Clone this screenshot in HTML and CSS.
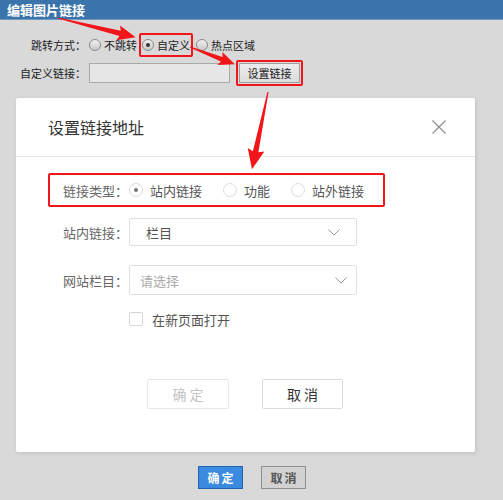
FILE: index.html
```html
<!DOCTYPE html>
<html lang="zh">
<head>
<meta charset="utf-8">
<title>编辑图片链接</title>
<link rel="stylesheet" href="styles.css">
</head>
<body>
<div class="page">
  <div class="titlebar">编辑图片链接</div>

  <div class="form">
    <div class="row row-mode">
      <span class="lbl">跳转方式：</span>
      <label class="opt"><i class="rad"></i>不跳转</label>
      <span class="mark mark-opt"><label class="opt"><i class="rad on"></i>自定义</label></span>
      <label class="opt"><i class="rad"></i>热点区域</label>
    </div>
    <div class="row row-link">
      <span class="lbl">自定义链接：</span>
      <span class="txt"></span>
      <span class="mark mark-btn"><span class="btn-set">设置链接</span></span>
    </div>
  </div>

  <div class="dialog">
    <div class="dlg-head">
      <span class="dlg-title">设置链接地址</span>
      <svg class="dlg-close" width="14" height="14" viewBox="0 0 14 14"><path d="M0.5 0.5L13.5 13.5M13.5 0.5L0.5 13.5" stroke="#8c8c8c" stroke-width="1.1" fill="none"/></svg>
    </div>
    <div class="dlg-body">
      <div class="typebox">
        <span class="flbl">链接类型：</span>
        <label class="dopt"><i class="drad on"></i>站内链接</label>
        <label class="dopt"><i class="drad"></i>功能</label>
        <label class="dopt"><i class="drad"></i>站外链接</label>
      </div>
      <div class="frow frow-1">
        <span class="flbl">站内链接：</span>
        <div class="sel sel-1"><span class="sel-val">栏目</span>
          <svg class="chev" width="12" height="7" viewBox="0 0 12 7"><path d="M0.5 0.5L6 6L11.5 0.5" stroke="#9a9a9a" stroke-width="1" fill="none"/></svg>
        </div>
      </div>
      <div class="frow frow-2">
        <span class="flbl">网站栏目：</span>
        <div class="sel sel-2"><span class="sel-ph">请选择</span>
          <svg class="chev" width="12" height="7" viewBox="0 0 12 7"><path d="M0.5 0.5L6 6L11.5 0.5" stroke="#9a9a9a" stroke-width="1" fill="none"/></svg>
        </div>
      </div>
      <div class="frow frow-3">
        <span class="flbl"></span>
        <label class="chk"><i class="box"></i>在新页面打开</label>
      </div>
      <div class="dlg-actions">
        <span class="dbtn dbtn-off">确 定</span>
        <span class="dbtn">取 消</span>
      </div>
    </div>
  </div>

  <div class="actions">
    <span class="abtn abtn-ok">确定</span>
    <span class="abtn abtn-cancel">取消</span>
  </div>

  <svg class="arrows" width="503" height="500" viewBox="0 0 503 500">
    <g fill="#f2151a">
      <polygon transform="translate(58,18) rotate(13.9)" points="0,-0.6 64,-2.6 62,-7.5 80,0 62,7.5 64,2.6 0,0.6"/>
      <polygon transform="translate(190,47) rotate(21.1)" points="0,-0.6 34,-2.4 32,-7 48,0 32,7 34,2.4 0,0.6"/>
      <polygon transform="translate(268,92) rotate(101.7)" points="0,-0.6 61,-2.8 59,-8.5 79,0 59,8.5 61,2.8 0,0.6"/>
    </g>
  </svg>
</div>
</body>
</html>
```

FILE: styles.css
```css
html, body {
  margin: 0;
  padding: 0;
  background: #d9d9d9;
}
body {
  font-family: "Noto Sans CJK SC", "Noto Sans", sans-serif;
  color: #333;
}
.page {
  position: relative;
  width: 503px;
  height: 500px;
  overflow: hidden;
  white-space: nowrap;
}
.titlebar {
  height: 20px;
  line-height: 20px;
  background: #3b74ab;
  border-bottom: 1px solid #6f97bf;
  box-sizing: border-box;
  color: #fff;
  font-size: 13px;
  font-weight: bold;
  padding-left: 7px;
}

/* top form */
.form {
  padding-top: 13px;
  font-size: 11px;
  color: #222;
}
.row {
  display: flex;
  align-items: center;
}
.row-mode { height: 24px; }
.row-link { height: 26px; margin-top: 3px; }
.lbl {
  width: 86px;
  text-align: right;
  flex: none;
}
.opt {
  display: flex;
  align-items: center;
  margin-left: 3px;
  margin-right: 2px;
  flex: none;
}
.rad {
  width: 10px;
  height: 10px;
  border-radius: 50%;
  border: 1px solid #8a8a8a;
  background: linear-gradient(#f2f2f2, #c8c8c8);
  margin-right: 3px;
  position: relative;
  flex: none;
}
.rad.on::after {
  content: "";
  position: absolute;
  left: 3px;
  top: 3px;
  width: 4px;
  height: 4px;
  border-radius: 50%;
  background: #333;
}
.mark {
  border: 2px solid #f2151a;
  border-radius: 2px;
  box-sizing: border-box;
  display: flex;
  align-items: center;
  flex: none;
}
.mark-opt {
  height: 24px;
  padding-right: 1px;
}
.mark-opt .opt { margin-left: 1px; margin-right: 0; }
.txt {
  width: 141px;
  height: 20px;
  box-sizing: border-box;
  border: 1px solid #a9a9a9;
  background: #e6e6e6;
  margin-left: 3px;
  flex: none;
}
.mark-btn {
  height: 26px;
  margin-left: 6px;
  padding: 0 1px;
}
.btn-set {
  display: block;
  width: 61px;
  height: 20px;
  line-height: 19px;
  text-align: center;
  box-sizing: border-box;
  border: 1px solid #a0a0a0;
  background: linear-gradient(#ececec, #dcdcdc);
  font-size: 11px;
  color: #222;
}

/* dialog */
.dialog {
  margin: 12px 0 0 16px;
  width: 459px;
  height: 354px;
  background: #fff;
  border-radius: 2px;
  box-shadow: 1px 1px 4px rgba(0, 0, 0, 0.12);
}
.dlg-head {
  height: 58px;
  border-bottom: 1px solid #e6e6e6;
  display: flex;
  align-items: center;
  justify-content: space-between;
  padding: 0 29px 0 32px;
}
.dlg-title {
  font-size: 16px;
  color: #333;
}
.dlg-close { display: block; margin-top: -1px; }
.dlg-body {
  padding: 16px 32px 0 32px;
  font-size: 13px;
  color: #555;
}
.typebox {
  width: 337px;
  height: 34px;
  box-sizing: border-box;
  border: 2px solid #f2151a;
  border-radius: 2px;
  display: flex;
  align-items: center;
  padding-left: 13px;
}
.flbl {
  width: 66px;
  flex: none;
  color: #666;
}
.dopt {
  display: flex;
  align-items: center;
  margin-right: 21px;
  color: #555;
  flex: none;
}
.drad {
  width: 14px;
  height: 14px;
  box-sizing: border-box;
  border: 1px solid #dadada;
  border-radius: 50%;
  margin-right: 7px;
  position: relative;
  flex: none;
}
.drad.on::after {
  content: "";
  position: absolute;
  left: 4px;
  top: 4px;
  width: 4px;
  height: 4px;
  border-radius: 50%;
  background: #777;
}
.frow {
  display: flex;
  align-items: center;
  padding-left: 15px;
}
.frow-1 { margin-top: 11px; }
.frow-2 { margin-top: 19px; }
.frow-3 { margin-top: 17px; height: 14px; }
.sel {
  width: 228px;
  box-sizing: border-box;
  border: 1px solid #e0e0e0;
  border-radius: 2px;
  display: flex;
  align-items: center;
  justify-content: space-between;
  flex: none;
}
.sel-1 { height: 28px; padding: 0 16px 0 16px; }
.sel-2 { height: 30px; padding: 0 9px 0 10px; }
.sel-val { color: #555; }
.sel-ph { color: #aaa; }
.chev { display: block; }
.chk {
  display: flex;
  align-items: center;
  color: #555;
}
.box {
  width: 14px;
  height: 14px;
  box-sizing: border-box;
  border: 1px solid #d6d6d6;
  border-radius: 2px;
  margin-right: 9px;
  flex: none;
}
.dlg-actions {
  display: flex;
  margin-top: 53px;
  padding-left: 99px;
  gap: 33px;
}
.dbtn {
  width: 81px;
  height: 30px;
  line-height: 28px;
  box-sizing: border-box;
  border: 1px solid #dcdcdc;
  border-radius: 2px;
  text-align: center;
  font-size: 14px;
  color: #333;
}
.dbtn-off {
  width: 82px;
  color: #c4c4c4;
  border-color: #e8e8e8;
}

/* bottom actions */
.actions {
  display: flex;
  justify-content: center;
  gap: 18px;
  margin-top: 14px;
  padding-left: 1px;
}
.abtn {
  width: 45px;
  height: 23px;
  line-height: 21px;
  box-sizing: border-box;
  text-align: center;
  font-size: 12px;
  letter-spacing: 2px;
  text-indent: 2px;
}
.abtn-ok {
  background: #3a8be0;
  border: 1px solid #1f62b4;
  color: #fff;
  font-weight: bold;
}
.abtn-cancel {
  background: #d2d2d2;
  border: 1px solid #8f8f8f;
  color: #555;
  font-weight: bold;
}

.arrows {
  position: absolute;
  left: 0;
  top: 0;
  pointer-events: none;
}
```
